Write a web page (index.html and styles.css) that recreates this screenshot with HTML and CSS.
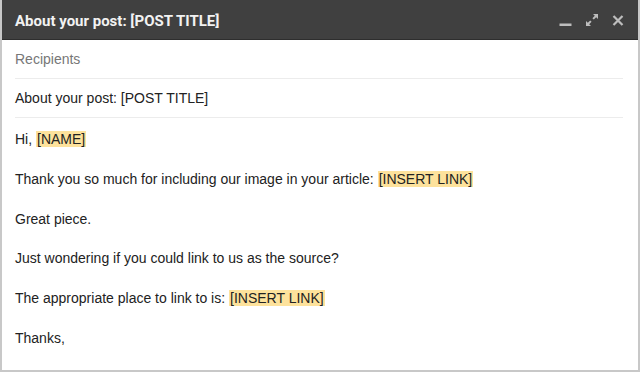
FILE: index.html
```html
<!DOCTYPE html>
<html lang="en">
<head>
    <meta charset="UTF-8">
    <meta name="viewport" content="width=device-width, initial-scale=1.0">
    <title>About your post</title>
    <link rel="stylesheet" href="styles.css">
</head>
<body>
    <div class="compose">
        <header class="compose-header">
            <span class="compose-title">About your post: [POST TITLE]</span>
            <div class="compose-actions">
                <svg class="icon" width="13" height="14" viewBox="0 0 13 14">
                    <rect x="0.5" y="10.5" width="12" height="2.5" fill="currentColor"/>
                </svg>
                <svg class="icon" width="14" height="14" viewBox="0 0 14 14">
                    <path d="M8 1h5v5l-1.8-1.8-2.4 2.4-1.4-1.4 2.4-2.4zM6 13H1V8l1.8 1.8 2.4-2.4 1.4 1.4-2.4 2.4z" fill="currentColor"/>
                </svg>
                <svg class="icon" width="12" height="14" viewBox="0 0 12 14">
                    <path d="M1.5 3l9 9M10.5 3l-9 9" stroke="currentColor" stroke-width="2.2"/>
                </svg>
            </div>
        </header>

        <div class="field recipients">Recipients</div>
        <div class="field subject">About your post: [POST TITLE]</div>

        <div class="message">
            <p>Hi, <mark>[NAME]</mark></p>
            <p>Thank you so much for including our image in your article: <mark>[INSERT LINK]</mark></p>
            <p>Great piece.</p>
            <p>Just wondering if you could link to us as the source?</p>
            <p>The appropriate place to link to is: <mark>[INSERT LINK]</mark></p>
            <p>Thanks,</p>
        </div>
    </div>
</body>
</html>
```

FILE: styles.css
```css
:root {
    --header: #404040;
    --border: #c8c8c8;
    --divider: #ececec;
    --text: #222222;
    --muted: #777777;
    --highlight: #fde29c;
}

* {
    margin: 0;
    padding: 0;
    box-sizing: border-box;
}

body {
    background-color: #ffffff;
    font-family: 'Liberation Sans', Arial, sans-serif;
    color: var(--text);
}

.compose {
    width: 640px;
    height: 372px;
    border: 2px solid var(--border);
    border-top: none;
    overflow: hidden;
}

.compose-header {
    height: 40px;
    background-color: var(--header);
    border-bottom: 1px solid #2e2e2e;
    margin: 0 -2px;
    display: flex;
    align-items: center;
    justify-content: space-between;
    padding: 0 16px 0 15px;
}

.compose-title {
    font-family: Roboto, 'Liberation Sans', sans-serif;
    font-weight: bold;
    font-size: 15px;
    color: #f2f2f2;
    padding-top: 2px;
}

.compose-actions {
    display: flex;
    align-items: center;
    gap: 13px;
    color: #bdbdbd;
    padding-top: 1px;
}

.field {
    margin: 0 15px 0 13px;
    height: 39px;
    line-height: 38px;
    font-size: 14px;
    border-bottom: 1px solid var(--divider);
}

.recipients {
    color: var(--muted);
}

.message {
    padding: 11px 13px 0;
    font-size: 14px;
}

.message p {
    line-height: 20px;
    margin-bottom: 19.8px;
}

mark {
    background-color: var(--highlight);
    color: var(--text);
    padding: 0 1px;
}
```
